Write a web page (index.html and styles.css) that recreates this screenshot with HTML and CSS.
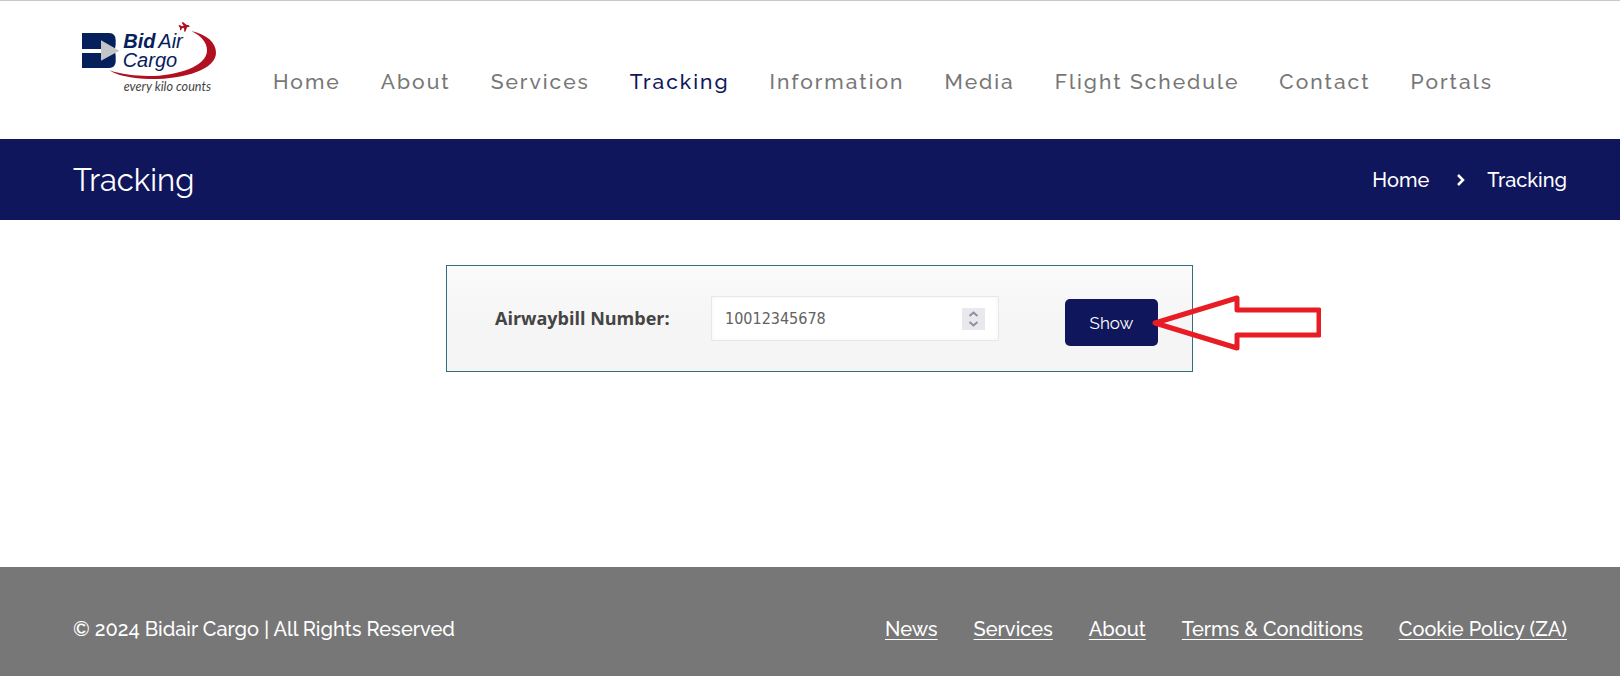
FILE: index.html
```html
<!DOCTYPE html>
<html lang="en">
<head>
  <meta charset="UTF-8">
  <meta name="viewport" content="width=device-width, initial-scale=1.0">
  <title>Tracking - BidAir Cargo</title>
  <link rel="stylesheet" href="styles.css">
</head>
<body>
  <header class="header">
    <a href="#" class="logo" aria-label="BidAir Cargo">
      <svg width="140" height="80" viewBox="60 30 420 240">
        <path fill="#06205c" d="M66 69H148Q167 70 167 90V104Q167 116 160 121Q167 126 167 139V156Q166 173 148 174H66V129H124V117H66Z"/>
        <path fill="#fff" d="M66 117H124V129H66Z"/>
        <path fill="#c3c5c8" d="M123 91L178 122L123 152Z"/>
        <path fill="#b01020" d="M394 63C440 73 468 98 468 128C468 178 374 208 268 207C220 206 174 198 148 181C184 193 224 198 264 198C354 198 440 168 441 122C442 98 424 78 394 63Z"/>
        <path fill="#b01020" d="M355 47L359 45L366 49L371 47L365 38L369 36L379 44L387 46L389 50L381 52L377 64L373 66L372 54L366 55L363 61L360 60L360 53Z"/>
        <text class="logo-bold" x="190" y="115">Bid</text>
        <text class="logo-name" x="295" y="115">Air</text>
        <text class="logo-name" x="188" y="172">Cargo</text>
        <text class="logo-tag" x="191" y="244">every kilo counts</text>
      </svg>
    </a>
    <nav class="nav">
      <a href="#">Home</a>
      <a href="#">About</a>
      <a href="#">Services</a>
      <a href="#" class="active">Tracking</a>
      <a href="#">Information</a>
      <a href="#">Media</a>
      <a href="#">Flight Schedule</a>
      <a href="#">Contact</a>
      <a href="#">Portals</a>
    </nav>
  </header>

  <div class="title-bar">
    <h1>Tracking</h1>
    <div class="breadcrumbs">
      <a href="#">Home</a>
      <svg class="chevron" width="8" height="12" viewBox="0 0 8 12"><path d="M1 1L6 6L1 11"/></svg>
      <a href="#">Tracking</a>
    </div>
  </div>

  <main class="content">
    <form class="tracking-form">
      <label for="awb">Airwaybill Number:</label>
      <div class="number-field">
        <input type="number" id="awb" value="10012345678">
        <svg class="spinner" width="23" height="22" viewBox="0 0 23 22">
          <path d="M7.500 8L11.500 4.500L15.500 8M7.500 14L11.500 17.500L15.500 14"/>
        </svg>
      </div>
      <button type="button" class="show-button">Show</button>
      <svg class="arrow" width="172" height="60" viewBox="0 0 172 60">
        <path d="M6 29L88 4V16H170V41H88V54Z"/>
      </svg>
    </form>
  </main>

  <footer class="footer">
    <p>© 2024 Bidair Cargo | All Rights Reserved</p>
    <nav class="footer-links">
      <a href="#">News</a>
      <a href="#">Services</a>
      <a href="#">About</a>
      <a href="#">Terms &amp; Conditions</a>
      <a href="#">Cookie Policy (ZA)</a>
    </nav>
  </footer>
</body>
</html>
```
FILE: styles.css
```css
:root {
  --navy: #10165c;
  --grey: #777777;
}
* {
  box-sizing: border-box;
}
body {
  font-family: Raleway, Lato, sans-serif;
  font-size: 20px;
  font-weight: 500;
  line-height: 28px;
  margin: 0;
  min-height: 100vh;
  display: flex;
  flex-direction: column;
  background-color: #fff;
}
a {
  color: inherit;
  text-decoration: none;
}
.header {
  display: flex;
  align-items: flex-start;
  height: 139px;
  padding: 19px 127px 0 80px;
  border-top: 1px solid #c8c8c8;
}
.logo {
  display: block;
  width: 140px;
  height: 80px;
}
.logo-bold,
.logo-name {
  font-family: "Liberation Sans", Arial, sans-serif;
  font-size: 60px;
  font-style: italic;
  font-weight: 400;
  fill: #06205c;
}
.logo-bold {
  font-weight: 700;
}
.logo-tag {
  font-family: Lato, sans-serif;
  font-size: 38px;
  font-style: italic;
  font-weight: 400;
  fill: #444;
}
.nav {
  flex: 1;
  display: flex;
  justify-content: space-between;
  margin-left: 53px;
  padding-top: 48px;
  font-size: 21px;
  letter-spacing: 2px;
  color: var(--grey);
}
.nav .active {
  color: var(--navy);
}
.title-bar {
  display: flex;
  justify-content: space-between;
  align-items: center;
  min-height: 81px;
  padding: 0 53px 0 73px;
  background-color: var(--navy);
  color: #fff;
}
.title-bar h1 {
  margin: 0;
  font-size: 31px;
  font-weight: 400;
  line-height: 40px;
}
.breadcrumbs {
  display: flex;
  align-items: center;
  gap: 22px;
}
.chevron {
  margin-left: 6px;
  fill: none;
  stroke: #fff;
  stroke-width: 2.5;
}
.content {
  flex: 1;
  padding: 45px 54px 0 73px;
}
.tracking-form {
  position: relative;
  display: flex;
  align-items: flex-start;
  max-width: 747px;
  margin: 0 auto;
  padding: 30px 34px 30px 48px;
  border: 1px solid #336d7f;
  background: linear-gradient(#fafafa, #f5f5f5 60%);
}
.tracking-form label {
  width: 216px;
  font-family: "Trebuchet MS", "Open Sans", sans-serif;
  font-size: 18px;
  font-weight: 700;
  line-height: 45px;
  color: #444;
}
.number-field {
  position: relative;
  width: 288px;
}
.number-field input {
  display: block;
  width: 100%;
  height: 45px;
  padding: 0 48px 0 13px;
  border: 1px solid #e8e8e8;
  background-color: #fff;
  box-shadow: inset 0 0 4px #f4f4f4;
  font-family: Tahoma, "DejaVu Sans Condensed", "DejaVu Sans", sans-serif;
  font-size: 16px;
  color: #626262;
  appearance: textfield;
}
.spinner {
  position: absolute;
  top: 12px;
  right: 14px;
  background-color: #e9e9ed;
  fill: none;
  stroke: #8f8f9d;
  stroke-width: 2;
  pointer-events: none;
}
.show-button {
  width: 93px;
  height: 47px;
  margin: 3px 0 -5px auto;
  border: 0;
  border-radius: 5px;
  background-color: var(--navy);
  color: #fff;
  font-family: Raleway, Lato, sans-serif;
  font-size: 17px;
  cursor: pointer;
}
.arrow {
  position: absolute;
  top: 28px;
  left: 702px;
  fill: none;
  stroke: #e81c24;
  stroke-width: 5;
  stroke-linejoin: round;
  pointer-events: none;
}
.footer {
  display: flex;
  justify-content: space-between;
  align-items: center;
  min-height: 109px;
  padding: 14px 53px 0 73px;
  background-color: var(--grey);
  color: #fff;
}
.footer p {
  margin: 0;
}
.footer-links {
  display: flex;
  gap: 36px;
}
.footer-links a {
  text-decoration: underline;
  text-decoration-thickness: 1px;
  text-underline-offset: 3px;
}
```
